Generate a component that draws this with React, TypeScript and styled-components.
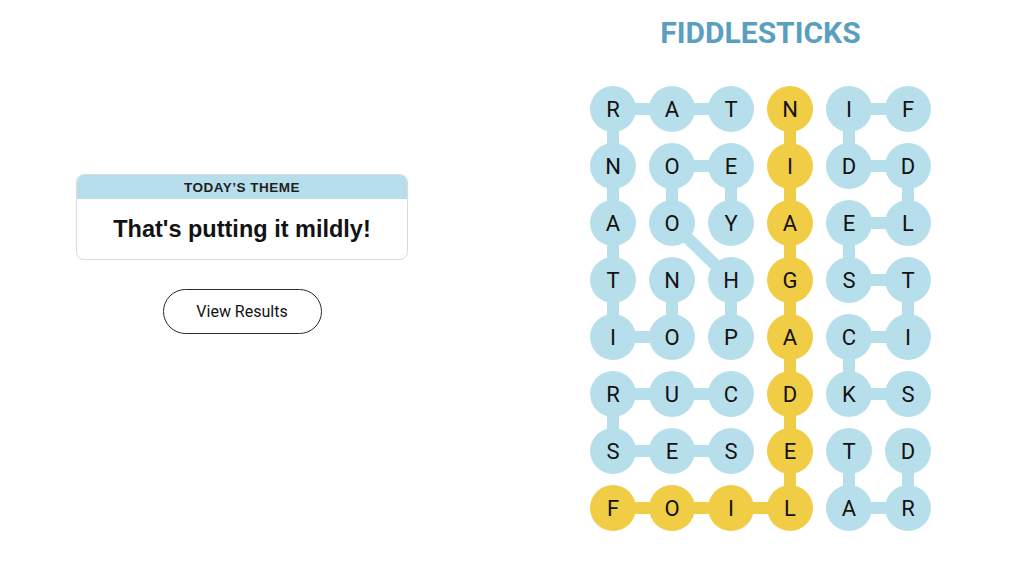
import React from "react";
import styled, { createGlobalStyle } from "styled-components";

const BLUE = "#b7dfeb";
const YELLOW = "#f1cd46";

const GlobalStyle = createGlobalStyle`
  html, body { margin: 0; padding: 0; background: #ffffff; }
  body { font-family: Roboto, "Liberation Sans", Arial, sans-serif; color: #121212; }
`;

const Page = styled.div`
  width: 1024px;
  height: 587px;
  display: flex;
  align-items: flex-start;
  box-sizing: border-box;
`;

const LeftPanel = styled.section`
  width: 332px;
  margin-left: 76px;
  margin-top: 174px;
  display: flex;
  flex-direction: column;
  align-items: center;
`;

const ThemeCard = styled.div`
  width: 100%;
  box-sizing: border-box;
  border: 1px solid #dcdcdc;
  border-radius: 8px;
  overflow: hidden;
  display: flex;
  flex-direction: column;
`;

const ThemeHeader = styled.div`
  background: ${BLUE};
  height: 24px;
  display: flex;
  align-items: center;
  justify-content: center;
  font-family: "Liberation Sans", Arial, sans-serif;
  font-size: 13.5px;
  font-weight: 700;
  letter-spacing: 0.5px;
  color: #1e1e1e;
`;

const ThemeBody = styled.div`
  height: 60px;
  display: flex;
  align-items: center;
  justify-content: center;
  font-family: "Liberation Sans", Arial, sans-serif;
  font-size: 23.5px;
  font-weight: 700;
  color: #121212;
`;

const ResultsButton = styled.button`
  margin-top: 29px;
  width: 159px;
  height: 45px;
  border-radius: 23px;
  border: 1px solid #2a2a2a;
  background: #ffffff;
  font-family: Roboto, "Liberation Sans", Arial, sans-serif;
  font-size: 16px;
  color: #121212;
  cursor: pointer;
`;

const RightPanel = styled.section`
  width: 341px;
  margin-left: 182px;
  display: flex;
  flex-direction: column;
  align-items: center;
`;

const Title = styled.h1`
  margin: 15px 0 0;
  font-size: 30px;
  line-height: 36px;
  font-weight: 700;
  color: #5a9fbf;
`;

const Board = styled.div`
  position: relative;
  margin-top: 35px;
  display: grid;
  grid-template-columns: repeat(6, 46px);
  grid-template-rows: repeat(8, 46px);
  column-gap: 13px;
  row-gap: 11px;
`;

const Connectors = styled.svg`
  position: absolute;
  inset: 0;
  width: 100%;
  height: 100%;
  z-index: 0;
  pointer-events: none;
`;

const Cell = styled.div<{ $kind: "theme" | "spangram" }>`
  position: relative;
  z-index: 1;
  width: 46px;
  height: 46px;
  border-radius: 50%;
  background: ${(p) => (p.$kind === "spangram" ? YELLOW : BLUE)};
  display: flex;
  align-items: center;
  justify-content: center;
  font-size: 22px;
  font-weight: 400;
  color: #121212;
`;

const LETTERS = [
  "RATNIF",
  "NOEIDD",
  "AOYAEL",
  "TNHGST",
  "IOPACI",
  "RUCDKS",
  "SESETD",
  "FOILAR",
];

type P = [number, number];
const paths: { kind: "theme" | "spangram"; cells: P[] }[] = [
  { kind: "theme", cells: [[0, 2], [0, 1], [0, 0], [1, 0], [2, 0], [3, 0], [4, 0], [4, 1], [3, 1]] },
  { kind: "theme", cells: [[4, 2], [3, 2], [2, 1], [1, 1], [1, 2], [2, 2]] },
  { kind: "theme", cells: [[5, 2], [5, 1], [5, 0], [6, 0], [6, 1], [6, 2]] },
  {
    kind: "theme",
    cells: [[0, 5], [0, 4], [1, 4], [1, 5], [2, 5], [2, 4], [3, 4], [3, 5], [4, 5], [4, 4], [5, 4], [5, 5]],
  },
  { kind: "theme", cells: [[6, 5], [7, 5], [7, 4], [6, 4]] },
  {
    kind: "spangram",
    cells: [[7, 0], [7, 1], [7, 2], [7, 3], [6, 3], [5, 3], [4, 3], [3, 3], [2, 3], [1, 3], [0, 3]],
  },
];

const cx = (c: number) => 23 + 59 * c;
const cy = (r: number) => 23 + 57 * r;

const isSpangram = (r: number, c: number) =>
  paths[5].cells.some(([pr, pc]) => pr === r && pc === c);

export default function App() {
  return (
    <>
      <GlobalStyle />
      <Page>
        <LeftPanel>
          <ThemeCard>
            <ThemeHeader>TODAY’S THEME</ThemeHeader>
            <ThemeBody>That's putting it mildly!</ThemeBody>
          </ThemeCard>
          <ResultsButton>View Results</ResultsButton>
        </LeftPanel>
        <RightPanel>
          <Title>FIDDLESTICKS</Title>
          <Board>
            <Connectors viewBox="0 0 341 445">
              {paths.map((p, i) =>
                p.cells.slice(1).map((cell, j) => {
                  const prev = p.cells[j];
                  return (
                    <line
                      key={`${i}-${j}`}
                      x1={cx(prev[1])}
                      y1={cy(prev[0])}
                      x2={cx(cell[1])}
                      y2={cy(cell[0])}
                      stroke={p.kind === "spangram" ? YELLOW : BLUE}
                      strokeWidth={12}
                    />
                  );
                })
              )}
            </Connectors>
            {LETTERS.map((row, r) =>
              row.split("").map((ch, c) => (
                <Cell key={`${r}-${c}`} $kind={isSpangram(r, c) ? "spangram" : "theme"}>
                  {ch}
                </Cell>
              ))
            )}
          </Board>
        </RightPanel>
      </Page>
    </>
  );
}
